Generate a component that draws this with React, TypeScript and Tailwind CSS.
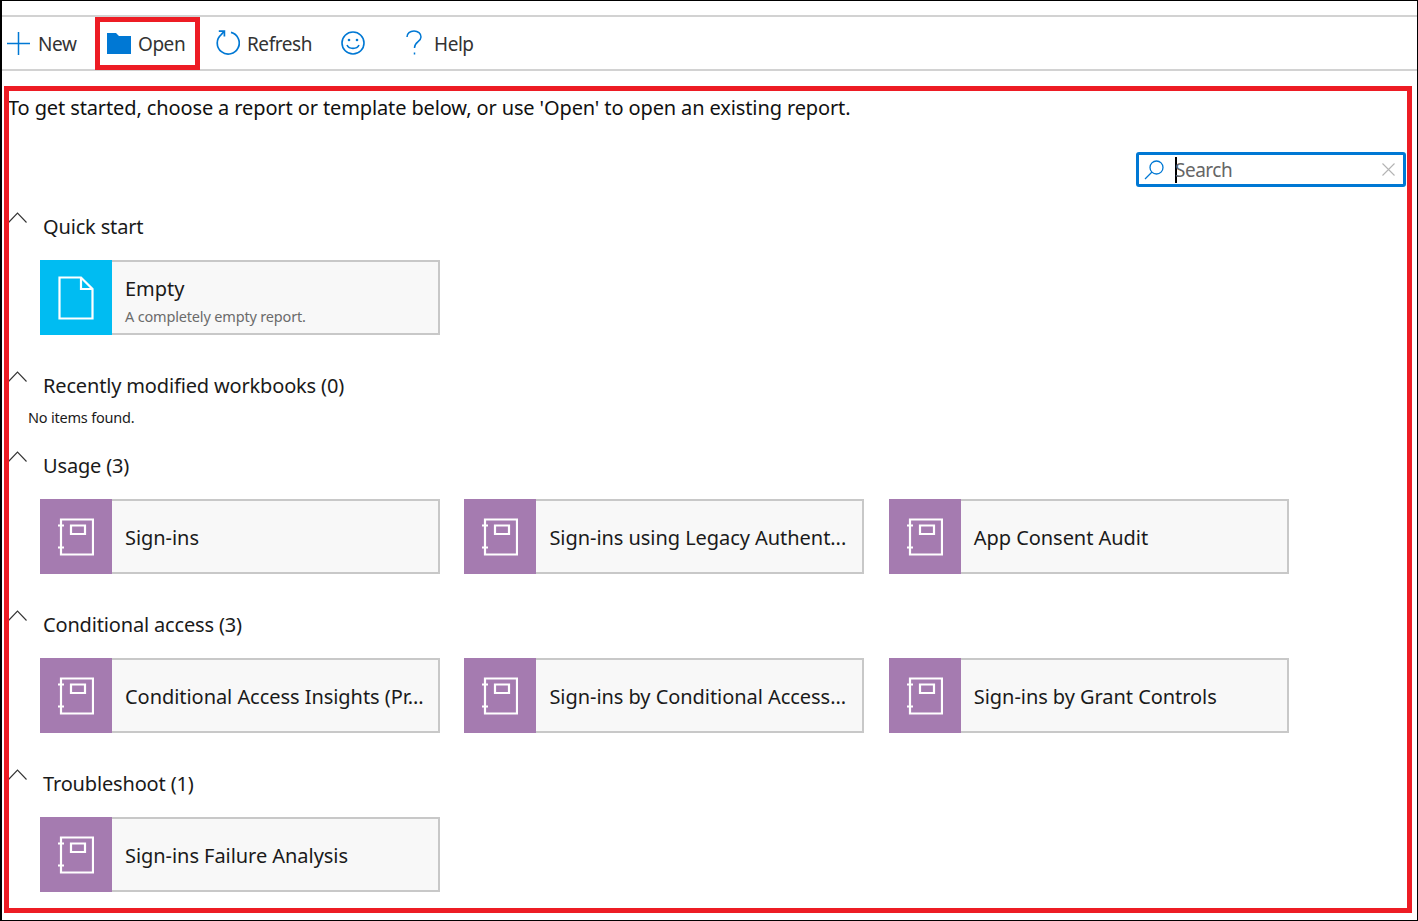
const font = "font-['Noto_Sans',sans-serif]";

function Chevron() {
  return (
    <svg width="19" height="11" viewBox="0 0 19 11" fill="none" stroke="#333" strokeWidth="1.1" className="mt-[1px] shrink-0">
      <path d="M0.5 10.5 L9.5 1 L18.5 10.5" />
    </svg>
  );
}

function BookIcon() {
  return (
    <svg width="36" height="38" viewBox="0 0 36 38" fill="none" stroke="#fff" strokeWidth="2.2">
      <path d="M3 1.5 H35 V36.5 H3 Z" />
      <path d="M0 7.5 H6 M0 29.5 H6" />
      <path d="M13 7.5 H27 V16 H13 Z" />
    </svg>
  );
}

function PageIcon() {
  return (
    <svg width="36" height="44" viewBox="0 0 36 44" fill="none" stroke="#fff" strokeWidth="2.2">
      <path d="M1.5 1.5 H23 L34.5 13 V42.5 H1.5 Z" />
      <path d="M23 1.5 V13 H34.5" />
    </svg>
  );
}

function Card({ title, sub, empty }: { title: string; sub?: string; empty?: boolean }) {
  return (
    <div className="flex h-[75px] w-[400px] shrink-0">
      <div className={`flex w-[72px] items-center justify-center ${empty ? "bg-[#00bcf2]" : "bg-[#a57bb0]"}`}>
        {empty ? <PageIcon /> : <BookIcon />}
      </div>
      <div className={`flex min-w-0 flex-1 flex-col justify-center border-2 border-l-0 border-[#c8c8c8] bg-[#f8f8f8] pl-[13px] ${sub ? "pt-[5px]" : "pt-[2px]"}`}>
        <div className="whitespace-nowrap text-[20px] leading-[28px] tracking-[-0.05px] text-[#1a1a1a]">{title}</div>
        {sub && <div className="mt-[4px] text-[14.5px] leading-[18px] tracking-[-0.17px] text-[#6b6b6b]">{sub}</div>}
      </div>
    </div>
  );
}

function Section({ title, cards, last }: { title: string; cards: { title: string; sub?: string; empty?: boolean }[]; last?: boolean }) {
  return (
    <section className={last ? "" : "mb-[35px]"}>
      <Header title={title} />
      <div className="ml-[32px] mt-[17px] flex gap-[24.4px]">
        {cards.map((c) => (
          <Card key={c.title} {...c} />
        ))}
      </div>
    </section>
  );
}

function Header({ title }: { title: string }) {
  return (
    <div className="flex h-[32px] items-start">
      <Chevron />
      <h2 className="ml-[16px] text-[20px] font-normal leading-[32px] tracking-[-0.16px] text-[#1a1a1a]">{title}</h2>
    </div>
  );
}

function ToolButton({ icon, label, className }: { icon: React.ReactNode; label: string; className: string }) {
  return (
    <div className={`flex items-center ${className}`}>
      {icon}
      {label && <span className="pt-[2px] text-[19px] tracking-[-0.45px] text-[#333]">{label}</span>}
    </div>
  );
}

export default function App() {
  return (
    <div className={`relative h-[921px] w-full overflow-hidden border border-l-2 border-black bg-white ${font}`}>
      <div className="mt-[14px] flex h-[56px] items-center border-y-2 border-[#d2d2d2] pl-[5px]">
        <ToolButton
          className="w-[90px] gap-[8px]"
          label="New"
          icon={
            <svg width="23" height="23" viewBox="0 0 23 23" stroke="#0078d4" strokeWidth="1.5">
              <path d="M11.5 0 V23 M0 11.5 H23" />
            </svg>
          }
        />
        <ToolButton
          className="ml-[10px] w-[109px] gap-[7px]"
          label="Open"
          icon={
            <svg width="24" height="22" viewBox="0 0 24 22" fill="#0078d4">
              <path d="M0 1 H9 L12 4 H24 V22 H0 Z" />
            </svg>
          }
        />
        <ToolButton
          className="w-[125px] gap-[7px]"
          label="Refresh"
          icon={
            <svg width="24" height="26" viewBox="0 0 24 26" fill="none" stroke="#0078d4" strokeWidth="1.7">
              <path d="M15 2.4 A11 11 0 1 1 5.2 4.6 L8 1.6" />
              <path d="M2.8 1.2 H8.4 V6.6" />
            </svg>
          }
        />
        <ToolButton
          className="w-[64px]"
          label=""
          icon={
            <svg width="24" height="24" viewBox="0 0 24 24" fill="none" stroke="#0078d4" strokeWidth="1.6">
              <circle cx="12" cy="12" r="11" />
              <circle cx="8" cy="9" r="1.3" fill="#0078d4" stroke="none" />
              <circle cx="16" cy="9" r="1.3" fill="#0078d4" stroke="none" />
              <path d="M6 14 C8 18.5 16 18.5 18 14" />
            </svg>
          }
        />
        <ToolButton
          className="gap-[11px]"
          label="Help"
          icon={
            <svg width="18" height="26" viewBox="0 0 18 26" fill="none" stroke="#0078d4" strokeWidth="1.5">
              <path d="M2 7 C2 3.5 5 1 9 1 C13 1 16 3.5 16 7 C16 12 9.5 11.5 9.5 18" />
              <path d="M9.5 22.5 V24.5" />
            </svg>
          }
        />
      </div>

      <main className="pl-[6px]">
        <p className="mt-[21px] text-[20px] leading-[32px] tracking-[-0.12px] text-[#111]">
          To get started, choose a report or template below, or use 'Open' to open an existing report.
        </p>
        <div className="mr-[11px] mt-[28px] flex justify-end">
          <div className="flex h-[35px] w-[270px] items-center rounded-[3px] border-[3px] border-[#0078d4] pl-[5px] pr-[8px]">
            <svg width="20" height="20" viewBox="0 0 20 20" fill="none" stroke="#0078d4" strokeWidth="1.3">
              <circle cx="12.5" cy="7.5" r="6.5" />
              <path d="M8 12 L1 19" />
            </svg>
            <div className="ml-[11px] h-[26px] w-[2px] bg-black" />
            <span className="-ml-[2px] flex-1 pt-[2px] text-[19px] tracking-[-0.5px] text-[#666]">Search</span>
            <svg width="13" height="13" viewBox="0 0 13 13" stroke="#b4b4b4" strokeWidth="1.1">
              <path d="M0.5 0.5 L12.5 12.5 M12.5 0.5 L0.5 12.5" />
            </svg>
          </div>
        </div>

        <div className="mt-[24px]">
          <Section title="Quick start" cards={[{ title: "Empty", sub: "A completely empty report.", empty: true }]} />
          <Header title="Recently modified workbooks (0)" />
          <p className="ml-[20px] h-[32px] text-[14.5px] leading-[30px] tracking-[-0.2px] text-[#1a1a1a]">No items found.</p>
          <div className="h-[16px]" />
          <Section
            title="Usage (3)"
            cards={[{ title: "Sign-ins" }, { title: "Sign-ins using Legacy Authent..." }, { title: "App Consent Audit" }]}
          />
          <Section
            title="Conditional access (3)"
            cards={[
              { title: "Conditional Access Insights (Pr..." },
              { title: "Sign-ins by Conditional Access..." },
              { title: "Sign-ins by Grant Controls" },
            ]}
          />
          <Section title="Troubleshoot (1)" cards={[{ title: "Sign-ins Failure Analysis" }]} last />
        </div>
      </main>

      {/* Annotation boxes drawn over the screenshot */}
      <div className="pointer-events-none absolute left-[93px] top-[16px] h-[53px] w-[105px] border-[5px] border-[#ed1c24]" />
      <div className="pointer-events-none absolute left-[2px] top-[85px] h-[827px] w-[1408px] border-[5px] border-[#ed1c24]" />
    </div>
  );
}
